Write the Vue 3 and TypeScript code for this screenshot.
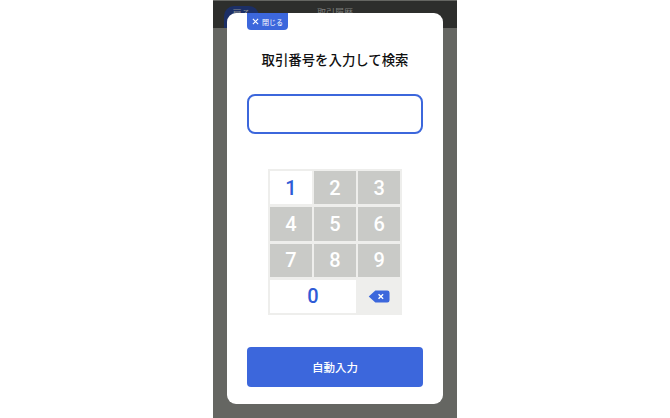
<script setup lang="ts">
const keys: { label: string; active?: boolean; wide?: boolean }[] = [
  { label: '1', active: true },
  { label: '2' },
  { label: '3' },
  { label: '4' },
  { label: '5' },
  { label: '6' },
  { label: '7' },
  { label: '8' },
  { label: '9' },
  { label: '0', active: true, wide: true },
]
</script>

<template>
  <div class="page">
    <div class="phone">
      <header class="topbar">
        <span class="back">戻る</span>
        <span class="bar-title">取引履歴</span>
      </header>
      <div class="backdrop">
        <section class="modal">
          <button class="close">
            <svg class="close-x" viewBox="0 0 8 8" width="7" height="7">
              <path d="M1 1L7 7M7 1L1 7" stroke="#fff" stroke-width="1.3" fill="none" />
            </svg>
            閉じる
          </button>
          <h1 class="title">取引番号を入力して検索</h1>
          <div class="field"></div>
          <div class="keypad">
            <div
              v-for="k in keys"
              :key="k.label"
              class="key"
              :class="{ active: k.active, wide: k.wide }"
            >{{ k.label }}</div>
            <div class="key erase">
              <svg viewBox="0 0 24 14" width="22" height="13">
                <path d="M8 .5H21a2.5 2.5 0 0 1 2.5 2.5V11a2.5 2.5 0 0 1-2.5 2.5H8L.8 7Z" fill="#3c67dc" />
                <path d="M11.5 4.5L16.5 9.5M16.5 4.5L11.5 9.5" stroke="#fff" stroke-width="1.5" fill="none" />
              </svg>
            </div>
          </div>
          <button class="auto">自動入力</button>
        </section>
      </div>
    </div>
  </div>
</template>

<style>
html, body { margin: 0; background: #fff; }
</style>

<style scoped>
.page {
  width: 670px;
  height: 418px;
  box-sizing: border-box;
  padding-left: 213px;
  display: flex;
  overflow: hidden;
  background: #fff;
  font-family: "Noto Sans CJK JP", "Noto Sans", sans-serif;
}
.phone {
  width: 244px;
  height: 418px;
  display: flex;
  flex-direction: column;
  position: relative;
  background: #656662;
}
.topbar {
  height: 27px;
  flex: none;
  margin-top: 1px;
  background: #2d2e2c;
  position: relative;
  display: flex;
  justify-content: center;
  overflow: hidden;
}
.back {
  position: absolute;
  left: 11px;
  top: 5px;
  width: 35px;
  height: 24px;
  border-radius: 10px 10px 0 0;
  background: #1c2f66;
  color: #8d8f90;
  font-size: 9px;
  line-height: 16px;
  text-align: center;
}
.bar-title {
  color: #7d7e7c;
  font-size: 9px;
  line-height: 24px;
}
.backdrop {
  flex: 1;
}
.modal {
  position: absolute;
  left: 14px;
  top: 13px;
  width: 216px;
  height: 391px;
  box-sizing: border-box;
  padding: 0 20px;
  background: #fff;
  border-radius: 9px;
  display: flex;
  flex-direction: column;
  align-items: center;
}
.close {
  align-self: flex-start;
  width: 41px;
  height: 17px;
  padding: 0;
  border: 0;
  border-radius: 0 0 4px 4px;
  background: #3c67dc;
  color: #fff;
  font-family: inherit;
  font-size: 7px;
  display: flex;
  align-items: center;
  justify-content: center;
  gap: 3px;
}
.close-x {
  flex: none;
}
.title {
  margin: 18px 0 0;
  height: 22px;
  font-size: 13.4px;
  line-height: 22px;
  font-weight: 500;
  color: #111;
  white-space: nowrap;
}
.field {
  margin-top: 24px;
  width: 176px;
  height: 40px;
  box-sizing: border-box;
  border: 2px solid #3c67dc;
  border-radius: 8px;
  background: #fff;
  flex: none;
}
.keypad {
  margin-top: 35px;
  width: 134px;
  height: 146px;
  box-sizing: border-box;
  padding: 2px;
  background: #eeeeec;
  display: grid;
  grid-template-columns: repeat(3, 1fr);
  grid-template-rows: repeat(4, 1fr);
  gap: 3px 2.5px;
  flex: none;
}
.key {
  background: #c9cac7;
  color: #fff;
  font-family: Roboto, sans-serif;
  font-size: 20px;
  font-weight: 500;
  display: flex;
  align-items: center;
  justify-content: center;
}
.key.active {
  background: #fff;
  color: #2f5bd6;
}
.key.wide {
  grid-column: span 2;
}
.key.erase {
  background: #eeeeec;
}
.auto {
  margin-top: 32px;
  width: 176px;
  height: 40px;
  flex: none;
  border: 0;
  border-radius: 4px;
  background: #3c67dc;
  color: #fff;
  font-family: inherit;
  font-size: 11.5px;
  font-weight: 500;
}
</style>
